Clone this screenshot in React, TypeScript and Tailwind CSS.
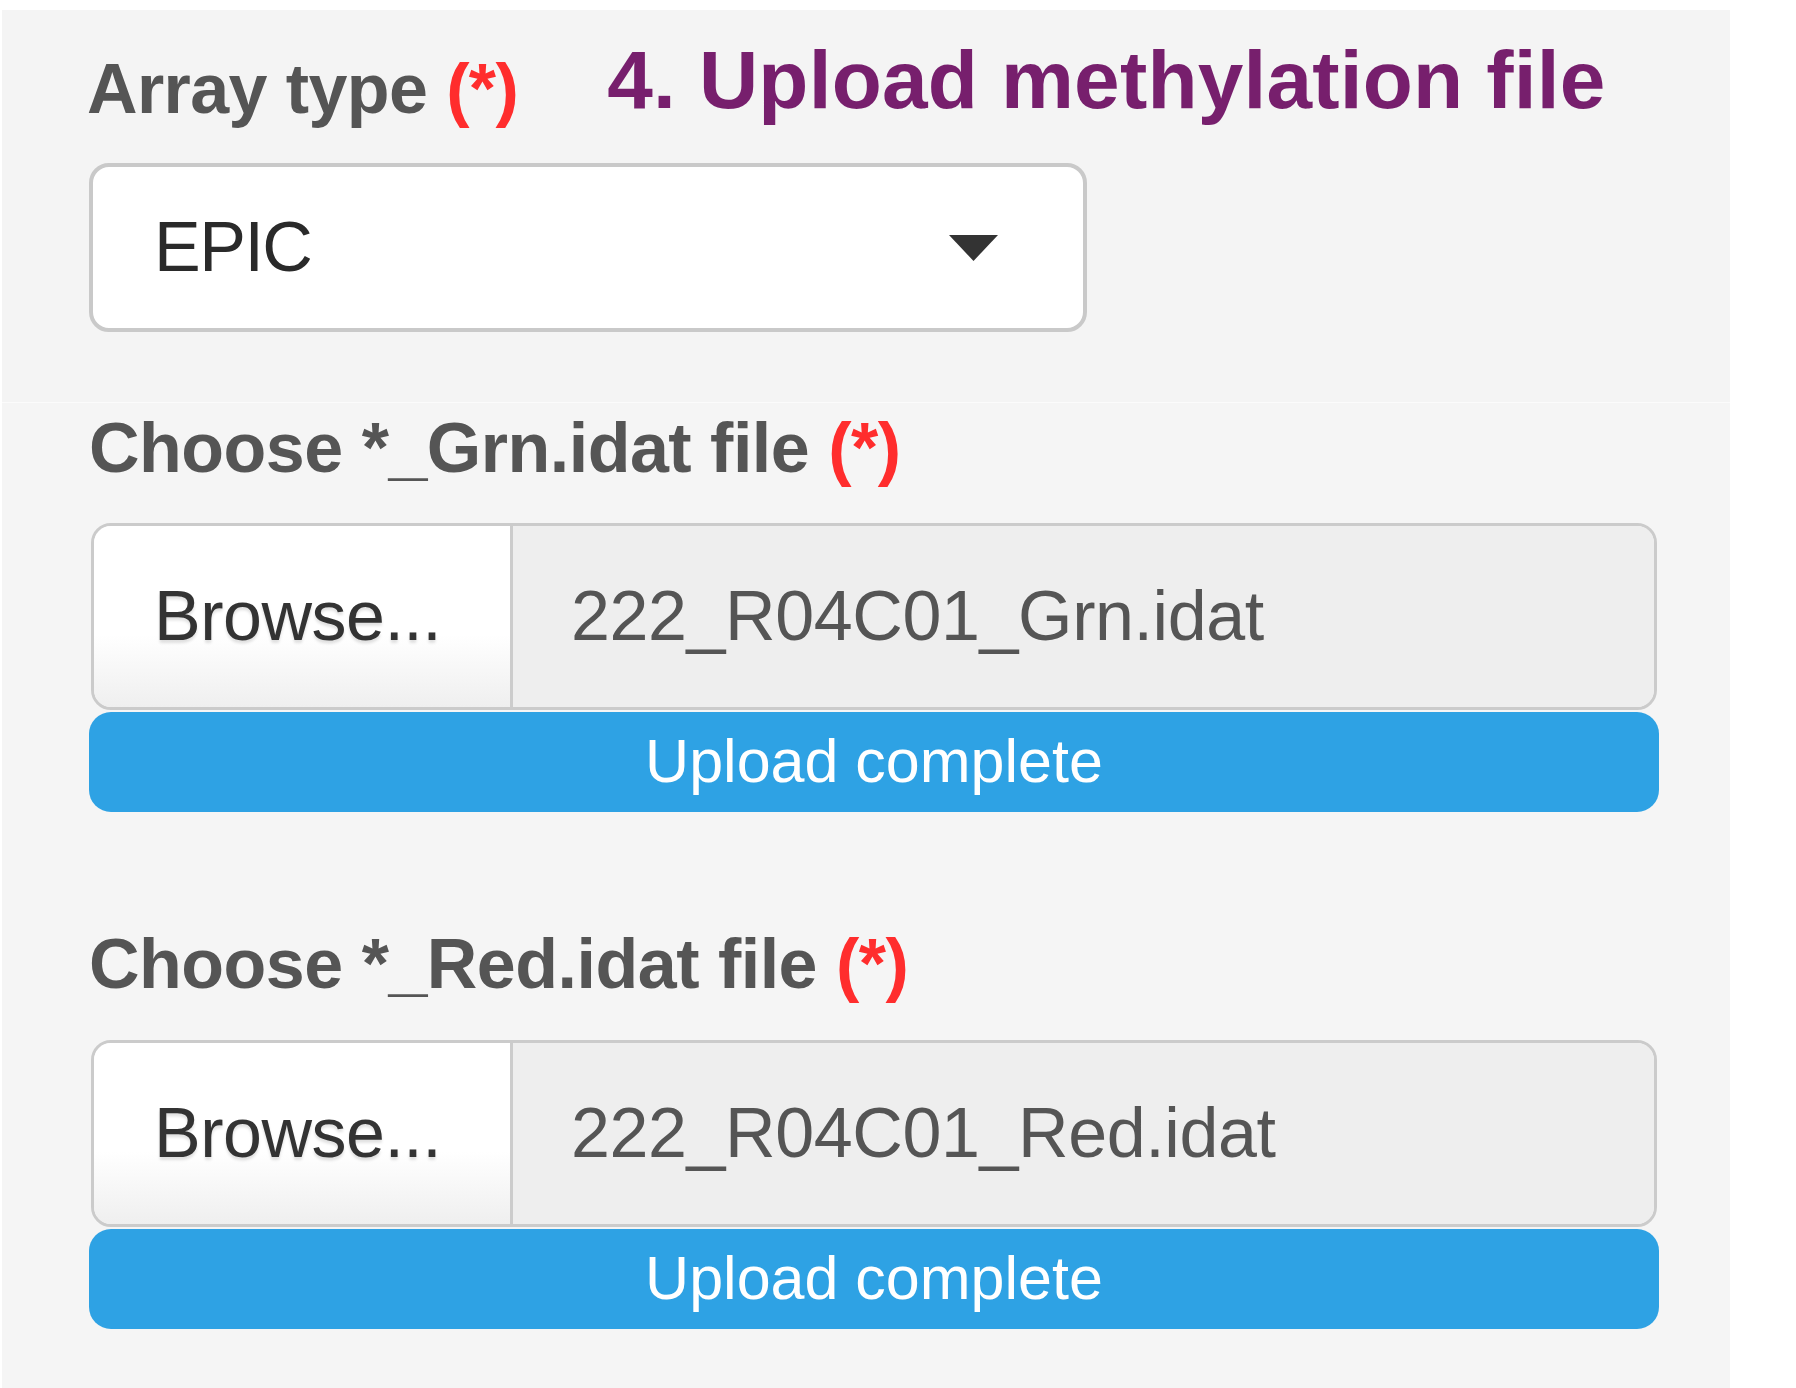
const FONT = { fontFamily: '"Liberation Sans", Arial, Helvetica, sans-serif' };

const Required = () => <span className="text-[#ff2d2d]">(*)</span>;

const FileInput = ({ fileName }: { fileName: string }) => (
  <div>
    <div className="flex h-[187px] w-[1566px] rounded-[20px] border-[3px] border-[#cbcbcb] overflow-hidden">
      <div className="flex w-[419px] items-center border-r-[3px] border-[#cccccc] bg-gradient-to-b from-white from-60% to-[#efefef] pl-[60px] text-[70px] tracking-[-0.5px] text-[#333333] [text-shadow:0_3px_3px_rgba(0,0,0,0.12)]">
        Browse...
      </div>
      <div className="flex flex-1 items-center bg-[#eeeeee] pl-[58px] text-[70px] tracking-[-0.4px] text-[#555555]">
        {fileName}
      </div>
    </div>
    <div className="mt-[2px] -ml-[2px] flex h-[100px] w-[1570px] items-center justify-center rounded-[22px] bg-[#2ea2e4] text-[61px] text-white">
      Upload complete
    </div>
  </div>
);

const App: React.FC = () => {
  return (
    <div className="min-h-screen bg-white pt-[10px] pl-[2px]" style={FONT}>
      <div className="w-[1728px] min-h-[1378px] bg-[#f5f5f5]">
        <section className="h-[392px] bg-[#f4f4f4] pl-[87px] pt-[22px]">
          <div className="flex items-start">
            <label className="-ml-[2px] mt-[18px] text-[70px] font-bold leading-[78px] tracking-[-0.6px] text-[#555555]">
              Array type <Required />
            </label>
            <h2 className="ml-[89px] text-[82px] font-bold leading-[95px] tracking-[0.2px] text-[#771f6d]">
              4. Upload methylation file
            </h2>
          </div>
          <div className="mt-[35px] flex h-[169px] w-[998px] items-center justify-between rounded-[20px] border-[4px] border-[#c9c9c9] bg-white pl-[61px] pr-[85px]">
            <span className="text-[70px] tracking-[-1.5px] text-[#2a2a2a]">EPIC</span>
            <svg width="49" height="26" viewBox="0 0 49 26">
              <path d="M0 0 H49 L24.5 26 Z" fill="#333333" />
            </svg>
          </div>
        </section>
        <div className="h-px bg-[#fbfbfb]" />
        <section className="pl-[87px] pt-[6px] pb-[60px]">
          <label className="block text-[70px] font-bold leading-[78px] tracking-[-0.5px] text-[#555555]">
            Choose *_Grn.idat file <Required />
          </label>
          <div className="mt-[36px] ml-[2px]">
            <FileInput fileName="222_R04C01_Grn.idat" />
          </div>
          <label className="mt-[113px] block text-[70px] font-bold leading-[78px] tracking-[-0.5px] text-[#555555]">
            Choose *_Red.idat file <Required />
          </label>
          <div className="mt-[37px] ml-[2px]">
            <FileInput fileName="222_R04C01_Red.idat" />
          </div>
        </section>
      </div>
    </div>
  );
};

export default App;
